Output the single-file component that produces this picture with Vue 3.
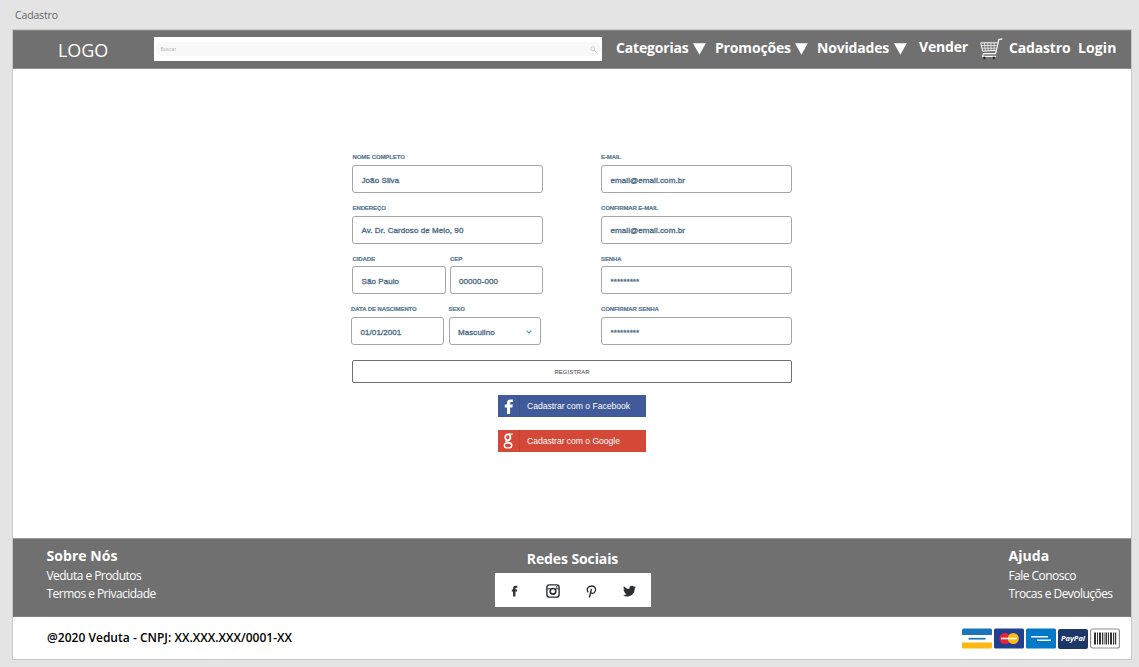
<script setup>
const menus = [
  { label: 'Categorias', cls: 'm-cat' },
  { label: 'Promoções', cls: 'm-pro' },
  { label: 'Novidades', cls: 'm-nov' },
]

const leftRows = [
  [{ label: 'NOME COMPLETO', value: 'João Silva' }],
  [{ label: 'ENDEREÇO', value: 'Av. Dr. Cardoso de Melo, 90' }],
  [
    { label: 'CIDADE', value: 'São Paulo' },
    { label: 'CEP', value: '00000-000' },
  ],
  [
    { label: 'DATA DE NASCIMENTO', value: '01/01/2001' },
    { label: 'SEXO', value: 'Masculino', select: true },
  ],
]

const rightRows = [
  { label: 'E-MAIL', value: 'email@email.com.br' },
  { label: 'CONFIRMAR E-MAIL', value: 'email@email.com.br' },
  { label: 'SENHA', value: '*********' },
  { label: 'CONFIRMAR SENHA', value: '*********' },
]

const bars = [
  [0, 2], [3, 1], [5, 2], [8, 1], [9.7, 0.8], [11.5, 1.6], [14, 1], [16, 2], [19, 1], [20.8, 1.4],
]
</script>

<template>
  <div class="canvas">
    <div class="board-name">Cadastro</div>
    <div class="board">
      <header class="top">
        <div class="logo">LOGO</div>
        <div class="search">
          <div class="search-pill">
            <span>Buscar</span>
            <svg width="7" height="7" viewBox="0 0 7 7">
              <circle cx="2.7" cy="2.7" r="1.9" fill="none" stroke="#c0c4c6" stroke-width=".8" />
              <path d="M4.1 4.1 6.3 6.3" stroke="#c0c4c6" stroke-width="1" />
            </svg>
          </div>
        </div>
        <nav class="nav">
          <a v-for="m in menus" :key="m.label" class="menu" :class="m.cls">
            <span>{{ m.label }}</span>
            <svg width="13" height="12" viewBox="0 0 13 12"><path d="M0 .3H12.8L6.4 11.8Z" fill="#fff" /></svg>
          </a>
          <a class="vender">Vender</a>
          <svg class="cart" width="23" height="22" viewBox="0 0 23 22" fill="none" stroke="#fff">
            <path d="M22.3.8 18.8 1.6 15.6 15.6H3.4" stroke-width="1.2" />
            <path d="M.8 4.8H17.4M.8 4.8 2.6 13.2 15.8 12.4" stroke-width="1" />
            <path d="M1.4 7.5H16.6M2 10.2H16.2M4.4 5 5.4 13M7.7 5 8.2 13M11 5V12.6M14.3 5 13.8 12.6" stroke-width=".7" />
            <path d="M3.4 15.6 2.6 18.4H16" stroke-width="1.1" />
            <circle cx="4.4" cy="20" r="1.5" fill="#222" stroke="#aaa" stroke-width=".3" />
            <circle cx="13.8" cy="20" r="1.5" fill="#222" stroke="#aaa" stroke-width=".3" />
          </svg>
          <a class="cadastro">Cadastro</a>
          <a class="login">Login</a>
        </nav>
      </header>

      <main class="content">
        <form class="form" @submit.prevent>
          <div class="columns">
            <div class="col">
              <div v-for="(row, i) in leftRows" :key="i" class="row" :class="'row-' + i">
                <div v-for="f in row" :key="f.label" class="field">
                  <label>{{ f.label }}</label>
                  <div class="input">
                    <span>{{ f.value }}</span>
                    <svg v-if="f.select" width="6" height="4" viewBox="0 0 6 4">
                      <path d="M.6.6 3 3 5.4.6" fill="none" stroke="#3d9be9" stroke-width="1.1" />
                    </svg>
                  </div>
                </div>
              </div>
            </div>
            <div class="col">
              <div v-for="(f, i) in rightRows" :key="f.label" class="row" :class="'row-' + i">
                <div class="field">
                  <label>{{ f.label }}</label>
                  <div class="input"><span>{{ f.value }}</span></div>
                </div>
              </div>
            </div>
          </div>
          <button class="register">REGISTRAR</button>
          <div class="social-login">
            <a class="sbtn facebook">
              <span class="mark">
                <svg width="10" height="15" viewBox="0 0 10 15">
                  <path d="M3 15V8.4H.8V5.6H3V4C3 1.5 4.4.4 6.6.4 7.6.4 8.6.5 8.9.6V3H7.5C6.4 3 6.1 3.5 6.1 4.3V5.6H8.8L8.4 8.4H6.1V15Z" fill="#fff" />
                </svg>
              </span>
              <span class="text">Cadastrar com o Facebook</span>
            </a>
            <a class="sbtn google">
              <span class="mark">
                <svg width="11" height="16" viewBox="0 0 11 16" fill="none" stroke="#fff">
                  <ellipse cx="4.8" cy="4.3" rx="2.6" ry="3" stroke-width="1.7" />
                  <path d="M5.4 1.1H9.8" stroke-width="1.2" />
                  <path d="M3.6 7.2C2 8.6 3.6 9 5.6 9.5 7.6 10 8.9 10.6 8.7 12.3" stroke-width="1.4" />
                  <ellipse cx="5" cy="12.4" rx="3.7" ry="2.5" stroke-width="1.4" />
                </svg>
              </span>
              <span class="text">Cadastrar com o Google</span>
            </a>
          </div>
        </form>
      </main>

      <section class="links">
        <div class="about">
          <h3>Sobre Nós</h3>
          <a>Veduta e Produtos</a>
          <a>Termos e Privacidade</a>
        </div>
        <div class="networks">
          <h3>Redes Sociais</h3>
          <div class="icons">
            <svg width="8" height="12" viewBox="0 0 8 12">
              <path d="M2.1 11.4V6.6H.8V4.6H2.1V3.3C2.1 1.5 3 .7 4.8.7H6.3V2.7H5.2C4.6 2.7 4.4 3 4.4 3.5V4.6H6.3L6 6.6H4.4V11.4Z" fill="#2b2f33" />
            </svg>
            <svg width="14" height="14" viewBox="0 0 14 14" fill="none" stroke="#2b2f33">
              <rect x=".9" y=".9" width="12.2" height="12.2" rx="2.4" stroke-width="1.4" />
              <circle cx="7" cy="7.3" r="2.8" stroke-width="1.6" />
              <path d="M1 4.8H4.7M9.4 4.8H13" stroke-width="1.1" />
              <path d="M9.8 2.9H11.3" stroke-width="1.4" />
            </svg>
            <svg width="11" height="13" viewBox="0 0 11 13" fill="none" stroke="#2b2f33">
              <path d="M2.2 7.3C.2 4.6 1.6 1 5.5 1 8.4 1 9.9 2.8 9.5 5.2 9.1 7.9 6.7 9.2 4.9 7.8" stroke-width="1.3" />
              <path d="M5.5 3.9 3.4 12.5" stroke-width="1.4" />
            </svg>
            <svg width="13" height="12" viewBox="0 0 24 21">
              <path d="M23.9 3.2c-.9.4-1.8.7-2.8.8 1-.6 1.8-1.6 2.2-2.7-1 .6-2 1-3.1 1.2A4.9 4.9 0 0 0 11.8 7C7.7 6.8 4.1 4.8 1.7 1.9.4 4.1 1 7 3.2 8.4c-.8 0-1.6-.2-2.2-.6-.1 2.3 1.6 4.4 3.9 4.9-.7.2-1.5.2-2.2.1.6 2 2.4 3.4 4.6 3.4A9.9 9.9 0 0 1 0 18.2 13.9 13.9 0 0 0 21.5 5.7c.9-.7 1.8-1.5 2.4-2.5Z" fill="#2b2f33" />
            </svg>
          </div>
        </div>
        <div class="help">
          <h3>Ajuda</h3>
          <a>Fale Conosco</a>
          <a>Trocas e Devoluções</a>
        </div>
      </section>

      <footer class="bottom">
        <div class="copy">@2020 Veduta - CNPJ: XX.XXX.XXX/0001-XX</div>
        <div class="cards">
          <svg width="30" height="21" viewBox="0 0 30 21">
            <path d="M0 7V2Q0 .5 1.5.5H28.5Q30 .5 30 2V7Z" fill="#1b75bb" />
            <path d="M0 14.5V19Q0 20.5 1.5 20.5H28.5Q30 20.5 30 19V14.5Z" fill="#fdb813" />
            <path d="M6.5 10.7H23.5" stroke="#1b75bb" stroke-width="1.7" />
          </svg>
          <svg width="30" height="21" viewBox="0 0 30 21">
            <rect y=".5" width="30" height="20" rx="1.5" fill="#20418f" />
            <circle cx="11" cy="10.5" r="5.5" fill="#e5243b" />
            <circle cx="19.3" cy="10.5" r="5.5" fill="#fdb813" />
            <path d="M7 10.5H23" stroke="#fff" stroke-width="1.6" />
          </svg>
          <svg width="30" height="21" viewBox="0 0 30 21">
            <rect y=".5" width="30" height="20" rx="1.5" fill="#0079c9" />
            <path d="M5 8.7H22M11 12.3H25" stroke="#fff" stroke-width="1.5" />
          </svg>
          <div class="paypal">PayPal</div>
          <svg width="30" height="21" viewBox="0 0 30 21">
            <rect x=".6" y="1" width="28.8" height="19" rx="2" fill="#fff" stroke="#8b8f90" stroke-width="1.2" />
            <rect v-for="b in bars" :key="b[0]" :x="4 + b[0]" y="4.5" :width="b[1]" height="12" fill="#333" />
          </svg>
        </div>
      </footer>
    </div>
  </div>
</template>

<style>
body {
  background: #e4e4e4;
  overflow: hidden;
}
</style>

<style scoped>
* {
  box-sizing: border-box;
}
.canvas {
  width: 1139px;
  height: 667px;
  background: #e4e4e4;
  padding-left: 12px;
  font-family: "Open Sans", "Noto Sans", sans-serif;
}
.board-name {
  height: 29px;
  padding: 6px 0 0 3px;
  font-size: 10.5px;
  line-height: 18px;
  letter-spacing: -0.15px;
  color: #666;
}
.board {
  width: 1120px;
  height: 631px;
  border: 1px solid #c8c8c8;
  background: #fff;
  display: flex;
  flex-direction: column;
}
.top {
  height: 39px;
  background: #707070;
  border-top: 1px solid #858585;
  border-bottom: 1px solid #909090;
  display: flex;
  color: #fff;
}
.logo {
  width: 141px;
  padding-left: 45px;
  font-size: 18px;
  line-height: 39px;
  letter-spacing: -0.1px;
}
.search {
  width: 448px;
  height: 24px;
  margin-top: 6px;
  background: #fff;
  padding: 5px 1px;
}
.search-pill {
  height: 14px;
  border-radius: 7px;
  background: #f8f8f8;
  display: flex;
  align-items: center;
  justify-content: space-between;
  padding: 0 4px 0 5.5px;
  font: 5px/14px "Liberation Sans", sans-serif;
  color: #b4b8ba;
}
.nav {
  display: flex;
  padding-left: 14px;
  font-weight: 700;
  font-size: 14px;
  line-height: 20px;
  letter-spacing: -0.17px;
  white-space: nowrap;
}
.nav a {
  margin-top: 7px;
}
.menu {
  display: flex;
  justify-content: space-between;
  height: 20px;
}
.menu svg {
  margin-top: 5px;
}
.m-cat { width: 90px; margin-right: 9px; }
.m-pro { width: 93px; margin-right: 9px; }
.m-nov { width: 90px; margin-right: 12px; }
.nav .vender { width: 61px; margin-top: 6px; }
.cart { margin-top: 7px; }
.cadastro { width: 69px; margin-left: 6px; }
.login { letter-spacing: 0.1px; }

.content {
  height: 469px;
  padding: 84px 0 0 339px;
}
.form {
  width: 440px;
  font-family: "Liberation Sans", Arial, sans-serif;
}
.columns {
  display: flex;
  gap: 58px;
}
.col {
  width: 191px;
}
.row {
  display: flex;
  gap: 4px;
  height: 51px;
}
.row-1 { height: 50px; }
.row-3 { height: 55px; }
.col:first-child .row-3 {
  gap: 5px;
  margin-left: -1px;
  margin-right: 2px;
}
.field {
  flex: 1;
}
.field label {
  display: block;
  height: 12px;
  padding-left: 0.5px;
  font-size: 6px;
  line-height: 9px;
  font-weight: 700;
  letter-spacing: -0.1px;
  color: #587b97;
  -webkit-text-stroke: 0.2px #587b97;
  white-space: nowrap;
}
.col:last-child label,
.row-3 label {
  padding-left: 0;
}
.row-2 label {
  padding-top: 1px;
}
.input {
  height: 28px;
  border: 1px solid #a6a6a6;
  border-radius: 3px;
  padding: 2px 8px 0 8.5px;
  display: flex;
  align-items: center;
  justify-content: space-between;
  font-size: 8px;
  letter-spacing: 0.08px;
  color: #4f7088;
  -webkit-text-stroke: 0.35px #4f7088;
}
.row-1 .input {
  padding-top: 0;
}
.register {
  display: block;
  width: 440px;
  height: 23px;
  padding: 0;
  border: 1px solid #707070;
  border-radius: 2px;
  background: #fff;
  font: 6px/20px "Liberation Sans", Arial, sans-serif;
  color: #444;
}
.social-login {
  margin: 12px 0 0 146px;
  display: flex;
  flex-direction: column;
  gap: 13px;
}
.sbtn {
  width: 148px;
  height: 22px;
  display: flex;
  align-items: center;
  color: #fff;
  font-size: 8.6px;
  letter-spacing: -0.03px;
  white-space: nowrap;
}
.mark {
  width: 22px;
  height: 22px;
  display: flex;
  align-items: center;
  justify-content: center;
  border-right: 1px solid rgba(0, 0, 0, 0.08);
}
.text {
  margin-left: 7px;
}
.facebook { background: #415a99; }
.google { background: #d34836; }

.links {
  height: 79px;
  background: #707070;
  border-top: 1px solid #999;
  border-bottom: 1px solid #808080;
  display: flex;
  color: #fff;
  font-size: 12px;
  line-height: 18px;
  white-space: nowrap;
}
.links h3 {
  margin: 0;
  font-size: 14px;
  line-height: 20px;
  letter-spacing: 0.05px;
}
.links .networks h3 {
  letter-spacing: -0.1px;
}
.links a {
  display: block;
  letter-spacing: -0.54px;
}
.about {
  width: 448px;
  padding: 7px 0 0 33.5px;
}
.about h3,
.help h3 {
  height: 21px;
}
.networks {
  width: 224px;
  padding: 10px 34.5px 0 33.5px;
  text-align: center;
}
.networks .icons {
  width: 156px;
  height: 34px;
  margin-top: 4px;
  background: #fff;
  display: grid;
  grid-template-columns: repeat(4, 38px);
  padding: 2px 0 0 1.5px;
  align-items: center;
  justify-items: center;
}
.help {
  padding: 7px 0 0 323.5px;
}
.bottom {
  flex: 1;
  display: flex;
  justify-content: space-between;
  padding: 11px 11px 0 34px;
}
.copy {
  font-size: 12px;
  line-height: 20px;
  letter-spacing: 0.02px;
  font-weight: 600;
  color: #000;
  white-space: nowrap;
}
.cards {
  display: flex;
  gap: 2px;
}
.paypal {
  width: 30px;
  height: 20px;
  margin-top: 0.5px;
  border-radius: 2px;
  background: #1c3768;
  color: #fff;
  font: italic 700 7.5px/19px "Open Sans", sans-serif;
  text-align: center;
}
</style>
